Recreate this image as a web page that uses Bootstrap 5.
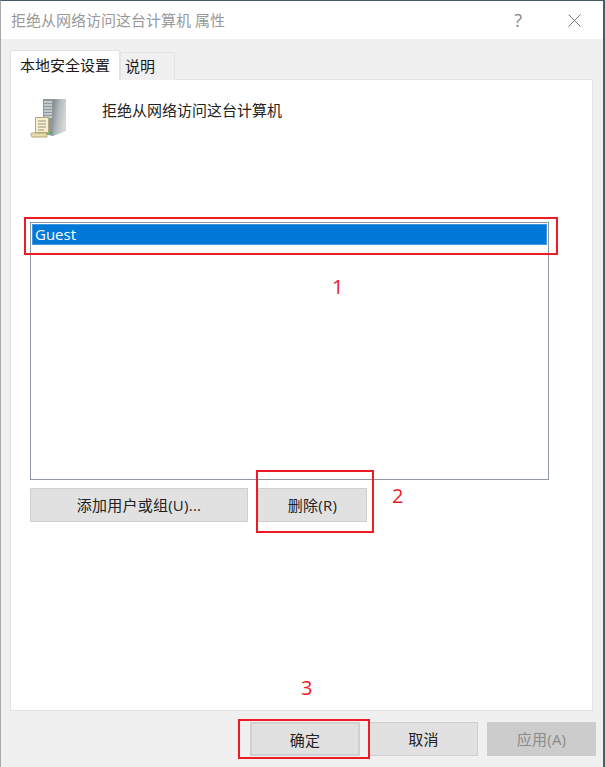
<!DOCTYPE html>
<html lang="zh-CN">
<head>
  <meta charset="UTF-8" />
  <meta name="viewport" content="width=device-width, initial-scale=1.0"/>
  <title>拒绝从网络访问这台计算机 属性</title>
  <link href="https://cdn.jsdelivr.net/npm/bootstrap@5.3.2/dist/css/bootstrap.min.css" rel="stylesheet">
  <script src="https://cdn.jsdelivr.net/npm/bootstrap@5.3.2/dist/js/bootstrap.bundle.min.js"></script>
  <style>
    html, body {
      height: 100%;
      overflow: hidden;
    }
    body {
      font-family: "Open Sans", "Noto Sans CJK SC", sans-serif;
      font-size: 15px;
      color: #1a1a1a;
      background-color: #f0f0f0;
    }
    .dlg {
      position: relative;
      width: 605px;
      height: 767px;
      border-top: 1px solid #3f5a60;
      border-left: 1px solid #a8a8a8;
      border-right: 2px solid #4a5f64;
      background-color: #f0f0f0;
    }
    .dlg-title {
      height: 38px;
      background-color: #fff;
      padding-left: 10px;
      padding-right: 22px;
      color: #999;
      line-height: 37px;
    }
    .help-mark {
      font-size: 18px;
      color: #888;
      margin-right: 46px;
      line-height: 1;
    }
    .dlg-body {
      padding: 11px 10px 0 9px;
    }
    .dlg .nav-tabs {
      border-bottom: 0;
      padding: 0;
      position: relative;
      z-index: 1;
      align-items: flex-end;
    }
    .dlg .nav-tabs .nav-link {
      border-radius: 0;
      border: 1px solid #e3e3e3;
      border-bottom: 0;
      margin: 0;
      color: #1a1a1a;
      background-color: #f0f0f0;
      padding: 0 19px 0 4px;
      height: 28px;
      line-height: 26px;
    }
    .dlg .nav-tabs .nav-link.active {
      background-color: #fff;
      height: 30px;
      line-height: 28px;
      padding: 0 9px;
      width: 110px;
      white-space: nowrap;
    }
    .tab-sheet {
      height: 632px;
      margin-top: -1px;
      background-color: #fff;
      border: 1px solid #e3e3e3;
      padding: 19px 0 0 19px;
    }
    .sheet-head {
      height: 123px;
      gap: 36px;
    }
    .sheet-head span {
      margin-top: 1px;
      line-height: 20px;
      color: #222;
    }
    .user-box {
      width: 519px;
      height: 258px;
      padding: 1px;
      border: 1px solid #8f97a3;
      border-radius: 0;
      background-color: #fff;
    }
    .user-box .list-group-item {
      border: 1px solid #3f97e0;
      border-radius: 0;
      background-color: #0078d7;
      color: #fff;
      padding: 0 0 0 2px;
      height: 21px;
      line-height: 18px;
    }
    .btn-line {
      gap: 10px;
    }
    .win-btn {
      flex: none;
      height: 34px;
      padding: 0;
      border-radius: 0;
      border: 1px solid #cfcfcf;
      background-color: #e1e1e1;
      color: #222;
      font-size: 15px;
      line-height: 32px;
      letter-spacing: .25px;
    }
    .win-btn:disabled {
      background-color: #cccccc;
      border-color: #cccccc;
      color: #8a8a8a;
      opacity: 1;
    }
    .btn-add { width: 218px; }
    .btn-del { width: 109px; }
    .btn-foot { width: 109px; }
    .btn-ok { width: 110px; border: 2px solid #d0d0d0; }
    .foot-row {
      padding: 11px 0 0 240px;
      gap: 9px;
    }
    .callout {
      position: absolute;
      border: 2px solid #ed1c24;
      pointer-events: none;
    }
    .call-1 { left: 23px; top: 216px; width: 534px; height: 38px; }
    .call-2 { left: 255px; top: 469px; width: 118px; height: 63px; }
    .call-3 { left: 237px; top: 718px; width: 132px; height: 40px; }
    .num {
      position: absolute;
      color: #ed1c24;
      font-family: "Open Sans", sans-serif;
      font-size: 20px;
      line-height: 20px;
    }
    .num-1 { left: 331px; top: 276px; }
    .num-2 { left: 391px; top: 485px; }
    .num-3 { left: 300px; top: 677px; }
  </style>
</head>
<body>
  <div class="dlg">
    <div class="dlg-title d-flex justify-content-between align-items-center">
      <span>拒绝从网络访问这台计算机 属性</span>
      <div class="d-flex align-items-center">
        <span class="help-mark">?</span>
        <svg width="13" height="13" viewBox="0 0 13 13"><path d="M.5.5l12 12M12.5.5l-12 12" stroke="#777" stroke-width="1" fill="none"/></svg>
      </div>
    </div>

    <div class="dlg-body">
      <ul class="nav nav-tabs">
        <li class="nav-item"><a class="nav-link active" href="#">本地安全设置</a></li>
        <li class="nav-item"><a class="nav-link" href="#">说明</a></li>
      </ul>

      <div class="tab-sheet">
        <div class="sheet-head d-flex align-items-start">
          <svg width="36" height="39" viewBox="0 0 36 39">
            <defs>
              <linearGradient id="tower" x1="0" y1="0" x2="1" y2="0.4">
                <stop offset="0" stop-color="#7f898b"/>
                <stop offset=".5" stop-color="#b4bbbb"/>
                <stop offset="1" stop-color="#d4d8d8"/>
              </linearGradient>
            </defs>
            <path d="M13 0h10v37l-10-2z" fill="#8f989c"/>
            <path d="M23 0h13v32l-13 5z" fill="url(#tower)"/>
            <path d="M14 3h8M14 6h8M14 9h8M14 12h8M14 15h8M14 18h8" stroke="#d5dadc" stroke-width="1.4"/>
            <rect x="20" y="33" width="2" height="2" fill="#35c24a"/>
            <path d="M5.500 18.500h13v15h-13z" fill="#f6eecf" stroke="#b5a878" stroke-width="1"/>
            <path d="M8 22h8M8 25h8M8 28h8M8 31h6" stroke="#9a9478" stroke-width="1"/>
            <path d="M1.500 34h15l.5 4H2q-2-2-.5-4z" fill="#e9dcab" stroke="#b5a878" stroke-width="1"/>
          </svg>
          <span>拒绝从网络访问这台计算机</span>
        </div>

        <div class="list-group user-box">
          <div class="list-group-item">Guest</div>
        </div>

        <div class="d-flex btn-line mt-2">
          <button class="btn win-btn btn-add" type="button">添加用户或组(U)...</button>
          <button class="btn win-btn btn-del" type="button">删除(R)</button>
        </div>
      </div>

      <div class="d-flex foot-row">
        <button class="btn win-btn btn-ok" type="button">确定</button>
        <button class="btn win-btn btn-foot" type="button">取消</button>
        <button class="btn win-btn btn-foot" type="button" disabled>应用(A)</button>
      </div>
    </div>

    <div class="callout call-1"></div>
    <div class="callout call-2"></div>
    <div class="callout call-3"></div>
    <span class="num num-1">1</span>
    <span class="num num-2">2</span>
    <span class="num num-3">3</span>
  </div>
</body>
</html>
